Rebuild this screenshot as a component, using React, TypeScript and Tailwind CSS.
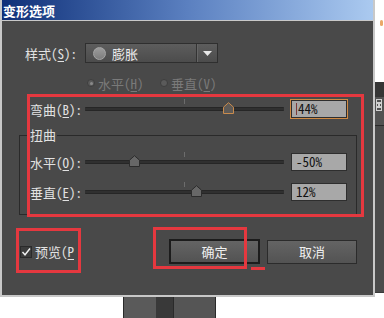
import React from 'react'

// slider value range is -100..100, track is 199px wide
const TRACK_W = 199

function Thumb({ active }: { active?: boolean }) {
  return (
    <svg width="11" height="12" viewBox="0 0 11 12">
      <path
        d="M5.5 0.7 L10.5 5.2 V11.5 H0.5 V5.2 Z"
        fill={active ? '#5e5a56' : '#676767'}
        stroke={active ? '#c98b4d' : '#2c2c2c'}
      />
    </svg>
  )
}

function Slider({ value, active }: { value: number; active?: boolean }) {
  const left = ((value + 100) / 200) * TRACK_W - 5.5
  return (
    <div className="relative flex items-center w-[199px] h-[18px]">
      <div className="w-full h-[4px] bg-[#303030] border-y border-[#262626] rounded-[1px]" />
      <div className="absolute left-[99px] top-[-1px] w-px h-[5px] bg-[#6c6c6c]" />
      <div className="absolute top-[2px] flex" style={{ left }}>
        <Thumb active={active} />
      </div>
    </div>
  )
}

function Field({ text, focused }: { text: string; focused?: boolean }) {
  return (
    <div
      className={
        'flex items-center w-[56px] h-[18px] ml-[7px] bg-[#a8a8a8] border border-[#2e2e2e] pl-[4px] text-[13px] text-[#111] ' +
        (focused ? 'outline outline-1 outline-[#d08a44]' : '')
      }
    >
      {focused && <span className="w-px h-[12px] bg-[#7a3b3b]" />}
      <span className={focused ? 'ml-[1px]' : ''}>{text}</span>
    </div>
  )
}

function Mn({ c }: { c: string }) {
  return <span className="underline underline-offset-2">{c}</span>
}

function SliderRow({ label, value, text, focused }: { label: React.ReactNode; value: number; text: string; focused?: boolean }) {
  return (
    <div className="flex items-center h-[18px]">
      <div className="w-[55px] text-[13px] leading-[13px] text-[#e2e2e2]">{label}</div>
      <Slider value={value} active={focused} />
      <Field text={text} focused={focused} />
    </div>
  )
}

function Radio({ checked }: { checked?: boolean }) {
  return (
    <div className="w-[8px] h-[8px] rounded-full bg-[#5a5a5a] border border-[#3e3e3e] flex items-center justify-center">
      {checked && <div className="w-[3px] h-[3px] rounded-full bg-[#8a8a8a]" />}
    </div>
  )
}

export default function App() {
  return (
    <div className="relative w-[384px] h-[318px] bg-white overflow-hidden font-['Noto_Sans_CJK_SC',sans-serif] [font-feature-settings:'hwid']">
      <div className="flex h-[297px]">
        {/* dialog */}
        <div className="flex flex-col w-[375px] h-[297px] border-x-2 border-b-2 border-[#c8c8c8]">
          <div className="flex items-center h-[20px] pl-[1px] bg-linear-to-r from-[#0f2f78] via-[#5b80c0] to-[#abcaf0] border-b border-[#c8c8c8] box-content">
            <span className="text-[13px] leading-[13px] font-bold text-white">变形选项</span>
          </div>

          <div className="flex-1 flex flex-col bg-[#494949] pt-[22px]">
            {/* style dropdown */}
            <div className="flex items-center h-[20px] pl-[23px]">
              <div className="w-[60px] text-[13px] leading-[13px] text-[#e2e2e2]">
                样式(<Mn c="S" />):
              </div>
              <div className="flex items-center w-[133px] h-[20px] border border-[#2f2f2f] bg-linear-to-b from-[#5d5d5d] to-[#4c4c4c]">
                <div className="ml-[7px] w-[13px] h-[13px] rounded-full border border-[#a5a5a5] bg-linear-to-b from-[#9c9c9c] to-[#7e7e7e]" />
                <span className="ml-[6px] text-[13px] leading-[13px] text-[#ececec]">膨胀</span>
                <div className="ml-auto h-full w-px bg-[#333] border-r border-[#666] box-content" />
                <svg width="9" height="5" viewBox="0 0 9 5" className="mx-[5px]">
                  <path d="M0 0 H9 L4.5 5 Z" fill="#e8e8e8" />
                </svg>
              </div>
            </div>

            {/* orientation radios (disabled) */}
            <div className="flex items-center mt-[13px] h-[14px] pl-[85px] text-[13px] leading-[13px] text-[#7a7a7a]">
              <div className="flex items-center w-[73px]">
                <Radio checked />
                <span className="ml-[3px]">水平(<Mn c="H" />)</span>
              </div>
              <div className="flex items-center">
                <Radio />
                <span className="ml-[3px]">垂直(<Mn c="V" />)</span>
              </div>
            </div>

            {/* bend */}
            <div className="mt-[10px] pl-[28px]">
              <SliderRow label={<>弯曲(<Mn c="B" />):</>} value={44} text="44%" focused />
            </div>

            {/* distortion group */}
            <fieldset className="mt-[11px] ml-[17px] w-[338px] border border-[#2a2a2a] pl-[10px] pb-[13px]">
              <legend className="ml-[-1px] px-[1px] text-[13px] leading-[12px] text-[#e2e2e2]">扭曲</legend>
              <div className="mt-[12px]">
                <SliderRow label={<>水平(<Mn c="O" />):</>} value={-50} text="-50%" />
              </div>
              <div className="mt-[12px]">
                <SliderRow label={<>垂直(<Mn c="E" />):</>} value={12} text="12%" />
              </div>
            </fieldset>

            {/* preview + buttons */}
            <div className="flex items-center mt-[24px] h-[25px] pl-[18px]">
              <div className="flex items-center w-[149px]">
                <div className="w-[12px] h-[12px] border border-[#2a2a2a] bg-[#3c3c3c] flex items-center justify-center">
                  <svg width="10" height="10" viewBox="0 0 10 10">
                    <path d="M1.5 5 L4 7.8 L9 1.5" stroke="#f0f0f0" strokeWidth="1.4" fill="none" />
                  </svg>
                </div>
                <span className="ml-[3px] text-[13px] leading-[13px] text-[#e2e2e2]">
                  预览(<Mn c="P" />
                </span>
              </div>
              <button className="w-[91px] h-[25px] border-2 border-[#1c1c1c] bg-linear-to-b from-[#646464] to-[#535353] text-[13px] text-[#f0f0f0]">
                确定
              </button>
              <button className="ml-[7px] w-[90px] h-[24px] border border-[#2b2b2b] bg-linear-to-b from-[#646464] to-[#535353] text-[13px] text-[#f0f0f0]">
                取消
              </button>
            </div>
          </div>
        </div>

        {/* application behind, right edge */}
        <div className="flex-1 flex flex-col">
          <div className="h-[82px] bg-white pt-[20px] pl-[5px]">
            <div className="w-[3px] h-[6px] rounded-sm bg-[#eaa868]" />
          </div>
          <div className="h-[15px] bg-[#353535]" />
          <div className="h-[28px] bg-[#525252] pt-[2px] pl-[1px]">
            <svg width="6" height="12" viewBox="0 0 6 12">
              <rect x="0.5" y="0.5" width="5" height="3" fill="none" stroke="#d0d0d0" />
              <rect x="0.5" y="4.5" width="2" height="3" fill="none" stroke="#d0d0d0" />
              <rect x="3.5" y="4.5" width="2" height="3" fill="none" stroke="#d0d0d0" />
              <rect x="0.5" y="8.5" width="5" height="3" fill="none" stroke="#d0d0d0" />
            </svg>
          </div>
          <div className="h-px bg-[#2a2a2a]" />
          <div className="flex-1 bg-[#4b4b4b] border-b border-[#3a3a3a]" />
          <div className="h-[4px] bg-white" />
        </div>
      </div>

      {/* application behind, bottom edge */}
      <div className="flex h-[21px]">
        <div className="w-[123px]" />
        <div className="w-[33px] bg-[#5a5a5a] border-l border-[#2a2a2a]" />
        <div className="w-[18px] bg-[#393939] border-r border-[#2a2a2a]" />
        <div className="w-[42px] bg-[#555555] border-r border-[#2a2a2a]" />
      </div>

      {/* red annotation marks */}
      <div className="absolute left-[27px] top-[94px] w-[337px] h-[123px] border-[3px] border-[#e5383f]" />
      <div className="absolute left-[16px] top-[228px] w-[65px] h-[45px] border-[3px] border-[#e5383f]" />
      <div className="absolute left-[153px] top-[227px] w-[94px] h-[42px] border-[3px] border-[#e5383f]" />
      <div className="absolute left-[251px] top-[267px] w-[14px] h-[3px] bg-[#e5383f]" />
    </div>
  )
}
